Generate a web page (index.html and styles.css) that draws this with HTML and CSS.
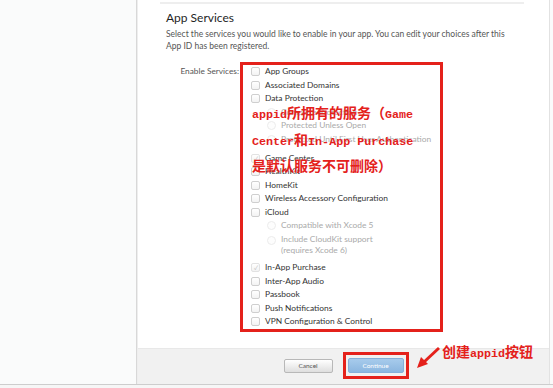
FILE: index.html
```html
<!DOCTYPE html>
<html lang="zh-CN">
<head>
  <meta charset="UTF-8" />
  <title>App Services</title>
  <link rel="stylesheet" href="styles.css">
</head>
<body>
  <div class="frame">
    <aside class="sidebar"></aside>

    <main class="panel">
      <div class="divider"></div>

      <section class="services">
        <h2>App Services</h2>
        <p class="lead">Select the services you would like to enable in your app. You can edit your choices after this App ID has been registered.</p>

        <div class="form-row">
          <label class="form-label">Enable Services:</label>

          <div class="svc-list">
            <div class="row"><span class="check"></span>App Groups</div>
            <div class="row"><span class="check"></span>Associated Domains</div>
            <div class="row"><span class="check"></span>Data Protection</div>
            <div class="group">
              <div class="row sub"><span class="radio"></span>Complete Protection</div>
              <div class="row sub"><span class="radio"></span>Protected Unless Open</div>
              <div class="row sub"><span class="radio"></span>Protected Until First User Authentication</div>
            </div>
            <div class="row"><span class="check checked">&#10003;</span>Game Center</div>
            <div class="row"><span class="check"></span>HealthKit</div>
            <div class="row"><span class="check"></span>HomeKit</div>
            <div class="row"><span class="check"></span>Wireless Accessory Configuration</div>
            <div class="row"><span class="check"></span>iCloud</div>
            <div class="group">
              <div class="row sub"><span class="radio"></span>Compatible with Xcode 5</div>
              <div class="row sub wrap"><span class="radio"></span><span>Include CloudKit support<br>(requires Xcode 6)</span></div>
            </div>
            <div class="row"><span class="check checked">&#10003;</span>In-App Purchase</div>
            <div class="row"><span class="check"></span>Inter-App Audio</div>
            <div class="row"><span class="check"></span>Passbook</div>
            <div class="row"><span class="check"></span>Push Notifications</div>
            <div class="row"><span class="check"></span>VPN Configuration &amp; Control</div>

            <p class="note"><span class="lat">appid</span>所拥有的服务（<span class="lat">Game</span><br><span class="lat">Center</span>和<span class="lat">In-App Purchase</span><br>是默认服务不可删除）</p>
          </div>
        </div>
      </section>

      <footer class="actions">
        <button class="btn cancel">Cancel</button>
        <span class="mark"><button class="btn continue">Continue</button></span>

        <svg class="arrow" width="28" height="28" viewBox="0 0 28 28">
          <path d="M25 3 L10 17" stroke="#e4211b" stroke-width="3" fill="none"/>
          <path d="M3 23 L7 12 L14 19 Z" fill="#e4211b"/>
        </svg>
        <span class="tag">创建<span class="lat">appid</span>按钮</span>
      </footer>
    </main>
  </div>
</body>
</html>
```

FILE: styles.css
```css
body {
  margin: 0;
  width: 553px;
  height: 388px;
  overflow: hidden;
  background: #f6f6f6;
  font-family: 'Lato', 'Liberation Sans', sans-serif;
  color: #333;
}
.frame {
  display: flex;
  height: 384px;
  border-bottom: 1px solid #cdcdcd;
  background: #fafbfb;
}
.sidebar {
  width: 136px;
  border-right: 1px solid #d8d8d8;
}
.panel {
  position: relative;
  width: 411px;
  display: flex;
  flex-direction: column;
  background: #fff;
  border-left: 1px solid #eeeeee;
  border-right: 1px solid #e2e2e2;
}
.divider {
  height: 2px;
  margin: 2px 25px 0 22px;
  background: #eeeeee;
}
.services {
  flex: 1;
  padding-left: 28px;
}
.services h2 {
  margin: 7px 0 0;
  font-size: 12px;
  line-height: 14px;
  font-weight: 400;
  color: #1f1f1f;
}
.lead {
  margin: 3px 0 0;
  width: 348px;
  font-size: 8.5px;
  line-height: 12px;
  color: #555;
}
.form-row {
  display: flex;
  margin-top: 10px;
}
.form-label {
  width: 73px;
  padding: 3px 1px 0 0;
  text-align: right;
  font-size: 8.3px;
  line-height: 13.5px;
  color: #555;
}
.svc-list {
  position: relative;
  width: 189px;
  padding: 0 0 0 8px;
  border: 3px solid #e4211b;
  font-size: 8.4px;
  line-height: 13.5px;
}
.row {
  display: flex;
  align-items: center;
  gap: 5px;
  white-space: nowrap;
}
.row.sub {
  padding-left: 16px;
  color: #aaa;
}
.row.wrap {
  align-items: flex-start;
  line-height: 11px;
  padding-top: 1px;
}
.row.wrap .radio {
  margin-top: 2px;
}
.group {
  margin-bottom: 5.5px;
}
.check {
  width: 7px;
  height: 7px;
  flex: none;
  border: 1px solid #cfcfcf;
  border-radius: 2px;
  background: linear-gradient(#ffffff, #f3f3f3);
  font-size: 6px;
  line-height: 7px;
  text-align: center;
  color: #bbb;
}
.check.checked {
  border-color: #e2e2e2;
}
.radio {
  width: 7px;
  height: 7px;
  flex: none;
  border: 1px solid #ececec;
  border-radius: 50%;
  background: #fdfdfd;
}
.note {
  position: absolute;
  top: 35.8px;
  left: 9px;
  margin: 0;
  white-space: nowrap;
  font-family: 'Noto Sans CJK SC', sans-serif;
  font-weight: 700;
  font-size: 14px;
  line-height: 23.7px;
  color: #e4211b;
}
.lat {
  font-family: 'Liberation Mono', monospace;
  font-weight: 700;
  font-size: 11.7px;
}
.actions {
  position: relative;
  display: flex;
  align-items: center;
  justify-content: center;
  gap: 10px;
  height: 36px;
  box-sizing: border-box;
  padding: 0 0 2px 5px;
  background: #f1f1f1;
  border-top: 1px solid #e8e8e8;
}
.btn {
  height: 15px;
  padding: 0;
  font-family: 'Lato', 'Liberation Sans', sans-serif;
  font-size: 6.5px;
  border-radius: 2px;
}
.cancel {
  width: 49px;
  height: 14px;
  color: #555;
  border: 1px solid #b8b8b8;
  background: linear-gradient(#ffffff, #dedede);
}
.mark {
  display: inline-flex;
  padding: 3px 2px;
  border: 3px solid #e4211b;
}
.continue {
  width: 56px;
  color: #fff;
  border: 1px solid #85afd9;
  background: linear-gradient(#a7cbec, #8bb6df);
}
.arrow {
  position: absolute;
  left: 276px;
  top: -4px;
}
.tag {
  position: absolute;
  left: 304px;
  top: -7px;
  font-family: 'Noto Sans CJK SC', sans-serif;
  font-weight: 700;
  font-size: 14px;
  line-height: 18px;
  color: #e4211b;
}
```
